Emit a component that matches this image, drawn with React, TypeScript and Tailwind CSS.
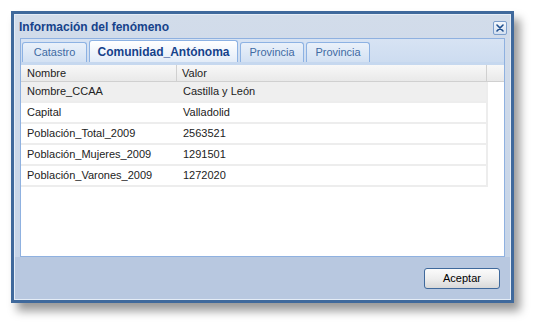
import React from "react";

const rows: [string, string][] = [
  ["Nombre_CCAA", "Castilla y León"],
  ["Capital", "Valladolid"],
  ["Población_Total_2009", "2563521"],
  ["Población_Mujeres_2009", "1291501"],
  ["Población_Varones_2009", "1272020"],
];

const tabs = [
  { label: "Catastro", w: "w-[65px]", active: false },
  { label: "Comunidad_Antónoma", w: "w-[149px]", active: true },
  { label: "Provincia", w: "w-[64px]", active: false },
  { label: "Provincia", w: "w-[64px]", active: false },
];

export default function App() {
  return (
    <div
      className="w-[538px] h-[328px] bg-white pt-[11px] pl-[11px]"
      style={{ fontFamily: '"Liberation Sans", Arial, sans-serif' }}
    >
      <div className="w-[503px] h-[292px] border-[3px] border-[#3f699c] bg-[#c3d3e8] shadow-[6px_8px_9px_rgba(0,0,0,0.4)] flex flex-col">
        <div className="flex-1 flex flex-col border border-[#e4ecf6] bg-gradient-to-b from-[#d2dcea] to-[#c4d3e7]">
          {/* title bar */}
          <div className="h-[23px] flex items-center justify-between pl-[4px] pr-[3px]">
            <span className="text-[12px] font-bold text-[#15428b] leading-none">
              Información del fenómeno
            </span>
            <div className="w-[14px] h-[14px] mt-[2px] rounded-[2px] border border-[#7d9fcc] bg-gradient-to-b from-[#f3f7fc] to-[#d4e0f0] flex items-center justify-center">
              <svg width="8" height="8" viewBox="0 0 8 8">
                <path d="M1 1 L7 7 M7 1 L1 7" stroke="#1f4f8e" strokeWidth="1.6" strokeLinecap="round" />
              </svg>
            </div>
          </div>
          {/* tab panel */}
          <div className="mx-[5px] h-[219px] border border-[#8fb1e0] bg-white flex flex-col">
            <div className="h-[26px] bg-gradient-to-b from-[#d7e3f3] to-[#cddcf0] flex items-end pl-[1px] gap-[2px] border-b-[3px] border-[#c6d8ef]">
              {tabs.map((t, i) => (
                <div
                  key={i}
                  className={
                    t.active
                      ? `${t.w} h-[22px] rounded-t-[3px] border border-b-0 border-[#8db2e3] bg-gradient-to-b from-[#ffffff] to-[#e3ecf8] flex items-center justify-center text-[12px] font-bold text-[#15428b]`
                      : `${t.w} h-[20px] rounded-t-[3px] border border-b-0 border-[#8db2e3] bg-gradient-to-b from-[#eaf1fa] to-[#d3e1f3] flex items-center justify-center text-[11px] text-[#416aa3]`
                  }
                >
                  {t.label}
                </div>
              ))}
            </div>
            <div className="flex-1 bg-white flex flex-col">
              <div className="h-[17px] flex bg-gradient-to-b from-[#f8f8f8] to-[#e9e9e9] border-b border-[#d0d0d0] text-[11px] text-[#222]">
                <div className="w-[156px] pl-[6px] flex items-center border-r border-[#d0d0d0]">Nombre</div>
                <div className="w-[310px] pl-[5px] flex items-center border-r border-[#d0d0d0]">Valor</div>
                <div className="flex-1" />
              </div>
              {rows.map(([k, v], i) => (
                <div
                  key={i}
                  className={`w-[467px] h-[21px] flex items-center text-[11px] text-[#222] border-b-2 border-r-2 border-[#ededed] ${i === 0 ? "bg-[#efefef]" : "bg-white"}`}
                >
                  <div className="w-[156px] pl-[6px]">{k}</div>
                  <div className="pl-[6px]">{v}</div>
                </div>
              ))}
            </div>
          </div>
          {/* footer */}
          <div className="flex-1 flex items-center justify-end pr-[10px] bg-[#b8c8e0]">
            <button className="w-[76px] h-[21px] rounded-[3px] border border-[#3f699c] bg-gradient-to-b from-[#fbfbfb] via-[#eeeeee] to-[#d8d8d8] text-[11px] text-black">
              Aceptar
            </button>
          </div>
        </div>
      </div>
    </div>
  );
}
